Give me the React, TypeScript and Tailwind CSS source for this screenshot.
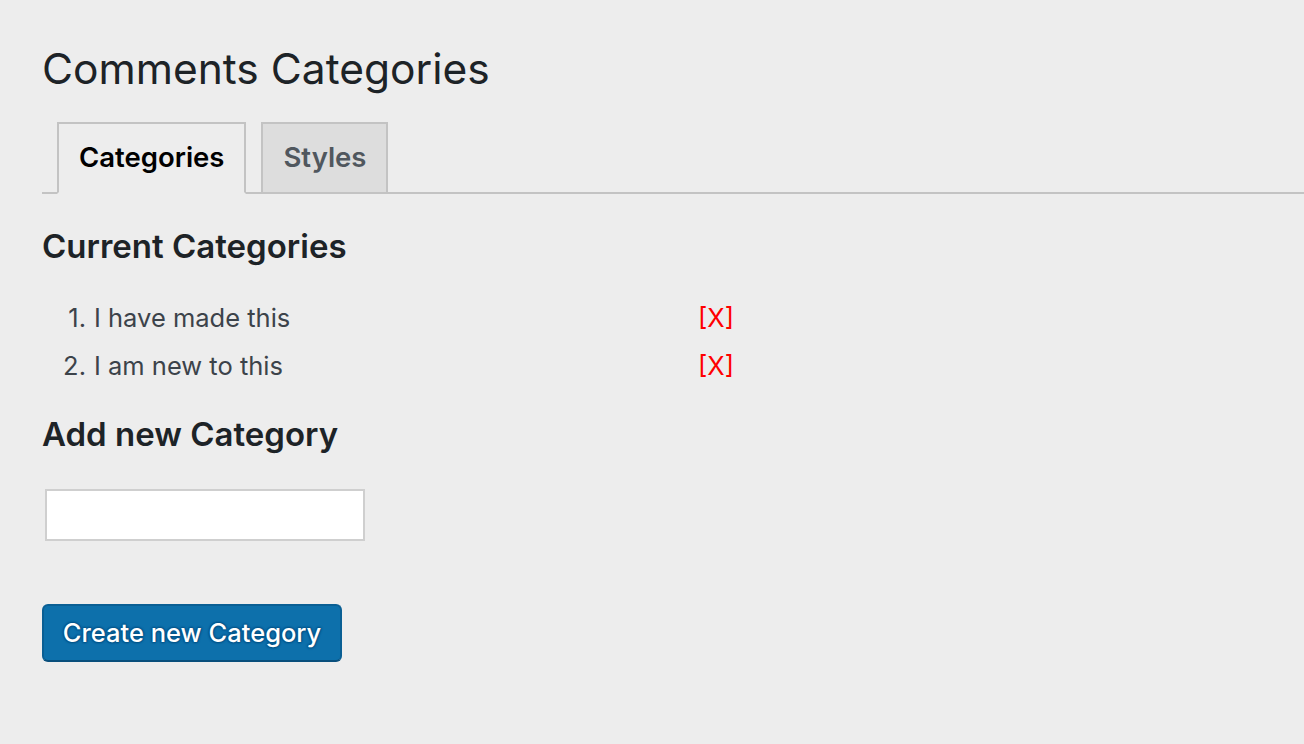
import { useState } from "react";

const initial = ["I have made this", "I am new to this"];

export default function App() {
  const [tab, setTab] = useState<"categories" | "styles">("categories");
  const [items, setItems] = useState(initial);
  const [value, setValue] = useState("");

  return (
    <div className="min-h-screen bg-[#ededed] pt-[38px] font-['Inter','Noto_Sans',sans-serif] text-[#1d2327]">
      <div className="pl-[42px]">
        <h1 className="text-[42.5px] font-normal leading-[62px]">Comments Categories</h1>
      </div>

      {/* Tabs */}
      <div className="mt-[22px] ml-[42px] flex items-end gap-[15px] border-b-2 border-[#c3c3c3] pl-[15px]">
        {[
          { id: "categories" as const, label: "Categories" },
          { id: "styles" as const, label: "Styles" },
        ].map((t) => (
          <button
            key={t.id}
            onClick={() => setTab(t.id)}
            className={`-mb-[2px] h-[72px] border-2 px-[20px] text-[27.5px] font-semibold leading-none ${
              tab === t.id
                ? "border-[#c3c3c3] border-b-[#ededed] bg-[#ededed] text-black"
                : "border-[#c3c3c3] bg-[#dddddd] text-[#50575e]"
            }`}
          >
            {t.label}
          </button>
        ))}
      </div>

      <div className="px-[42px]">
        <h2 className="mt-[32px] text-[33px] font-semibold leading-[40px]">Current Categories</h2>

        <ol className="mt-[36px] flex flex-col gap-[16px] text-[25.5px] leading-[32px] text-[#3c434a]">
          {items.map((item, i) => (
            <li key={item + i} className="flex items-center">
              <span className="w-[44px] text-right">{i + 1}.</span>
              <span className="ml-[8px] w-[604px]">{item}</span>
              <button
                onClick={() => setItems(items.filter((_, j) => j !== i))}
                className="text-[#ff0000]"
              >
                [X]
              </button>
            </li>
          ))}
        </ol>

        <h2 className="mt-[32px] text-[33px] font-semibold leading-[40px]">Add new Category</h2>

        <input
          value={value}
          onChange={(e) => setValue(e.target.value)}
          className="mt-[35px] ml-[3px] block h-[52px] w-[320px] border-2 border-[#cfcfcf] bg-white px-3 text-[22px] outline-none"
        />

        <button
          onClick={() => {
            if (value.trim()) {
              setItems([...items, value.trim()]);
              setValue("");
            }
          }}
          className="mt-[63px] block h-[58px] w-[300px] rounded-[6px] border-2 border-[#0a5f94] border-b-[#094f7c] bg-[#0d70ab] text-[25.5px] font-medium text-white [text-shadow:0_-1px_2px_#045388,1px_0_2px_#045388,-1px_0_2px_#045388,0_1px_2px_#045388]"
        >
          Create new Category
        </button>
      </div>
    </div>
  );
}
